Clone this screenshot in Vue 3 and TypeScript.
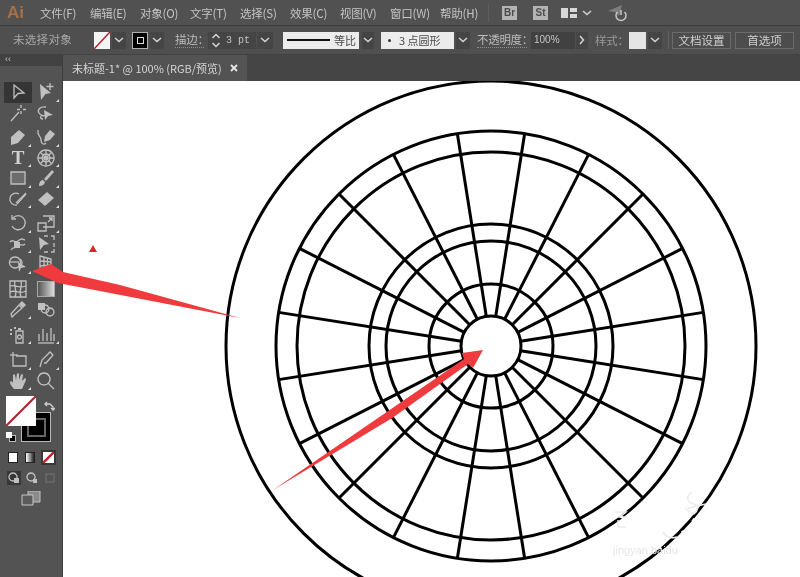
<script setup lang="ts">
interface Tool {
  name: string
  soft?: string[]
  fill?: string[]
  line?: string[]
  glyph?: string
  more?: boolean
  active?: boolean
  grad?: boolean
}

const menus = ['文件(F)', '编辑(E)', '对象(O)', '文字(T)', '选择(S)', '效果(C)', '视图(V)', '窗口(W)', '帮助(H)']

const groups: Tool[][] = [
  [
    { name: 'select', line: ['M6 3 L16 11 L10 11.5 L6 16Z'], active: true },
    { name: 'direct', fill: ['M4 2 L15 11 L9.5 12 L5 18Z'], line: ['M14 1v7M10.5 4.5h7'], more: true },
    { name: 'wand', line: ['M3 18 L11 9', 'M13 2v3M13 8v3M9 6.500h3M15 6.500h3'] },
    { name: 'lasso', line: ['M10 4 C4 3 1 7 3 10 C5 13 8 13 10 12', 'M5 13 C4 15 5 16 7 16'], fill: ['M8 7 L17 12 L12 13 L9 17Z'] },
  ],
  [
    { name: 'pen', fill: ['M3 18 L3 10 L11 3 L17 8 L10 16Z'], more: true },
    { name: 'curve', fill: ['M8 15 L9 9 L14 3 L19 7 L14 13Z'], line: ['M2 3 C1 10 5 8 5 13 C5 17 8 18 10 16'], more: true },
    { name: 'type', glyph: 'T', more: true },
    { name: 'polar', line: ['M10 2a8 8 0 1 0 .01 0Z', 'M10 6a4 4 0 1 0 .01 0Z', 'M10 2v16M2 10h16M4.500 4.500l11 11M15.500 4.500l-11 11'], more: true },
    { name: 'rect', soft: ['M3 4h14v12H3Z'], line: ['M3 4h14v12H3Z'], more: true },
    { name: 'brush', fill: ['M3 18 C3 14 5 12 7 12 L9 14 C8 17 6 18 3 18Z', 'M8 11 L16 2 L18 4 L10 13Z'], more: true },
    { name: 'shaper', line: ['M11 5 A6 6 0 1 0 9 16', 'M8 14 L18 4', 'M9 15 L18 5'], more: true },
    { name: 'eraser', fill: ['M2 11 L11 3 L18 9 L9 17Z'], more: true },
  ],
  [
    { name: 'rotate', line: ['M5 5 A7 7 0 1 1 4 13', 'M4 2v4h4'], more: true },
    { name: 'scale', line: ['M2 10h8v8H2Z', 'M7 3h11v11H7', 'M12 9l4-4M13 5h3v3'], more: true },
    { name: 'warp', line: ['M2 8c3-4 5 2 8-1s4-2 7-1', 'M3 16c2-4 5-1 7-4s4 1 7-2'], fill: ['M6 8h6v6H6Z'], more: true },
    { name: 'free', fill: ['M3 3 L13 10 L8 11 L4 16Z'], line: ['M8 2h4M15 2h3v4M18 9v4M18 15v3h-3M12 18H8'] },
    { name: 'shapebuilder', line: ['M7 3a5.500 5.500 0 1 0 .01 0Z', 'M12 5a4 4 0 0 1 0 7', 'M2 8h9'], fill: ['M10 8 L18 13 L13 14 L11 18Z'], more: true },
    { name: 'perspective', line: ['M4 2 L15 5 L15 14 L4 18Z', 'M4 7 L15 8M4 12 L15 11M8 3v14M11.500 4v12'] },
  ],
  [
    { name: 'mesh', line: ['M2 2h16v16H2Z', 'M2 7c5-2 7 3 16 0M2 13c5-3 9 3 16-1M7 2c-2 6 3 9 0 16M13 2c2 6-3 9 0 16'] },
    { name: 'gradient', grad: true },
    { name: 'dropper', line: ['M4 18 L3 15 L11 6 L14 9 L5 17Z'], fill: ['M11 5 L14 2 L18 6 L15 9Z'], more: true },
    { name: 'blend', fill: ['M2 4h7v7H2Z'], line: ['M9 6a4 4 0 1 0 .01 0Z', 'M14 9a4 4 0 1 0 .01 0Z'] },
  ],
  [
    { name: 'symbol', fill: ['M2 4h2v2H2ZM6 2h2v2H6ZM2 8h2v2H2Z', 'M10 3h3v2h-3Z'], line: ['M8 6h7v12H8Z', 'M11.500 10a2 2 0 1 0 .01 0Z'], more: true },
    { name: 'graph', line: ['M2 18h16', 'M3 16V9M7 16V4M11 16V8M15 16V3M18 16V9'], more: true },
  ],
  [
    { name: 'artboard', line: ['M5 2v14h13V6H8', 'M2 5h8'], more: true },
    { name: 'slice', line: ['M4 17 L6 10 L14 2 L17 5 L10 13 L8 13'], more: true },
    { name: 'hand', fill: ['M6 18 C4 16 2 13 2 11 C3 10 4 10 5 12 L5 4 C6 3 7 3 7 4 L8 9 L9 2.500 C10 2 11 2 11 3 L11 9 L13 3.500 C14 3 15 3 15 4 L14 10 L17 7 C18 7 18 8 18 9 L14 18Z'], more: true },
    { name: 'zoom', line: ['M8 2a6 6 0 1 0 .01 0Z', 'M12 12 L18 18'] },
  ],
]

// wheel drawing: every value read off the reference
const cx = 491
const cy = 346
const radii = [265, 215, 194, 122, 105, 62, 30]
const spokes = Array.from({ length: 20 }, (_, i) => {
  const a = ((9 + i * 18) * Math.PI) / 180
  return {
    x1: cx + 30 * Math.sin(a),
    y1: cy - 30 * Math.cos(a),
    x2: cx + 215 * Math.sin(a),
    y2: cy - 215 * Math.cos(a),
  }
})
</script>

<template>
  <div class="app">
    <header class="menubar">
      <span class="logo">Ai</span>
      <nav class="menus">
        <span v-for="m in menus" :key="m" class="menu">{{ m }}</span>
      </nav>
      <i class="vsep"></i>
      <span class="bridge">Br</span>
      <span class="bridge stock">St</span>
      <svg class="layout" width="16" height="12" viewBox="0 0 16 12">
        <path d="M0 1h7v10H0ZM9 1h7v4H9ZM9 7h7v4H9Z" />
      </svg>
      <svg class="chev layout-chev" width="10" height="8" viewBox="0 0 10 8"><path d="M1 2l4 3.500L9 2" /></svg>
      <svg class="sync" width="22" height="18" viewBox="0 0 22 18">
        <path class="sync-plane" d="M1 7 L15 1 L12 12 L8 8Z" />
        <path class="sync-power" d="M14 6v5M10.500 8a5 5 0 1 0 7 0" />
      </svg>
    </header>

    <section class="options">
      <div class="status">未选择对象</div>
      <div class="ml8 swatch-none"><svg width="16" height="17" viewBox="0 0 16 17"><path d="M0 17 L16 0" /></svg></div>
      <div class="drop ml2"><svg class="chev" width="10" height="8" viewBox="0 0 10 8"><path d="M1 2l4 3.500L9 2" /></svg></div>
      <div class="ml6 swatch-stroke"><i></i></div>
      <div class="drop ml2"><svg class="chev" width="10" height="8" viewBox="0 0 10 8"><path d="M1 2l4 3.500L9 2" /></svg></div>
      <span class="label dotted w29 ml11">描边：</span>
      <div class="stepper ml4">
        <svg class="chev" width="10" height="15" viewBox="0 0 10 15"><path d="M1.500 5L5 1.500 8.500 5M1.500 10L5 13.500 8.500 10" /></svg>
        <span>3 pt</span>
      </div>
      <div class="drop w16 ml1"><svg class="chev" width="10" height="8" viewBox="0 0 10 8"><path d="M1 2l4 3.500L9 2" /></svg></div>
      <div class="light w76 ml10"><i class="stroke-line"></i><span>等比</span></div>
      <div class="drop w12 ml3"><svg class="chev" width="10" height="8" viewBox="0 0 10 8"><path d="M1 2l4 3.500L9 2" /></svg></div>
      <div class="light w73 ml7"><i class="dot"></i><span>3 点圆形</span></div>
      <div class="drop ml2"><svg class="chev" width="10" height="8" viewBox="0 0 10 8"><path d="M1 2l4 3.500L9 2" /></svg></div>
      <span class="label dotted w50 ml7">不透明度：</span>
      <div class="field ml4">100%</div>
      <div class="drop w12 ml1"><svg class="chev" width="8" height="10" viewBox="0 0 8 10"><path d="M2 1l3.500 4L2 9" /></svg></div>
      <span class="label dim w29 ml7">样式：</span>
      <div class="style-swatch ml5"></div>
      <div class="drop ml2"><svg class="chev" width="10" height="8" viewBox="0 0 10 8"><path d="M1 2l4 3.500L9 2" /></svg></div>
      <i class="opt-sep"></i>
      <button class="btn ml3">文档设置</button>
      <button class="btn ml4">首选项</button>
    </section>

    <div class="body">
      <aside class="toolbar">
        <div class="collapse">‹‹</div>
        <div class="grip"></div>
        <div v-for="(group, g) in groups" :key="g" class="tools" :class="{ spaced: g >= 4 }">
          <div
            v-for="t in group"
            :key="t.name"
            class="tool"
            :class="{ active: t.active, more: t.more }"
          >
            <span v-if="t.glyph" class="glyph">{{ t.glyph }}</span>
            <i v-else-if="t.grad" class="grad-icon"></i>
            <svg v-else width="20" height="20" viewBox="0 0 20 20">
              <path v-for="d in t.soft" :key="d" class="icon-soft" :d="d" />
              <path v-for="d in t.fill" :key="d" class="icon-fill" :d="d" />
              <path v-for="d in t.line" :key="d" class="icon-line" :d="d" />
            </svg>
          </div>
        </div>

        <div class="colors">
          <div class="stroke-box"><i></i></div>
          <div class="fill-box"><svg width="30" height="30" viewBox="0 0 30 30"><path d="M0 30 L30 0" /></svg></div>
          <svg class="swap" width="12" height="12" viewBox="0 0 12 12"><path d="M2 4h5l3 3v3M4 2L2 4l2 2M8 8l2 2 2-2" /></svg>
          <div class="defaults"><i></i><b></b></div>
        </div>

        <div class="modes">
          <i class="mode-color"></i>
          <i class="mode-grad"></i>
          <span class="mode-none"><svg width="11" height="11" viewBox="0 0 11 11"><path d="M0 11 L11 0" /></svg></span>
        </div>

        <div class="draw">
          <span class="draw-on"><svg width="12" height="12" viewBox="0 0 12 12"><path d="M5 1a4 4 0 1 0 .01 0Z" class="icon-line" /><path d="M6 6h5v5H6Z" class="icon-fill" /></svg></span>
          <span><svg width="12" height="12" viewBox="0 0 12 12"><path d="M5 1a4 4 0 1 0 .01 0Z" class="icon-line" /><path d="M7 7h4v4H7Z" class="icon-fill" /></svg></span>
          <span class="draw-off"><svg width="12" height="12" viewBox="0 0 12 12"><path d="M2 2h8v8H2Z" /></svg></span>
        </div>

        <div class="screen">
          <svg width="20" height="15" viewBox="0 0 20 15"><path class="screen-back" d="M7 0h12v11H7Z" /><path class="screen-front" d="M1 4h11v10H1Z" /></svg>
        </div>
      </aside>

      <main class="doc">
        <div class="tabs">
          <div class="tab">
            <span>未标题-1* @ 100% (RGB/预览)</span>
            <svg width="8" height="8" viewBox="0 0 8 8"><path d="M1 1l6 6M7 1L1 7" /></svg>
          </div>
        </div>
        <div class="canvas">
          <svg class="wheel" viewBox="63 81 737 496" width="737" height="496">
            <g fill="none" stroke="#000" stroke-width="3">
              <circle v-for="r in radii" :key="r" :cx="cx" :cy="cy" :r="r" />
              <line v-for="(s, i) in spokes" :key="i" :x1="s.x1" :y1="s.y1" :x2="s.x2" :y2="s.y2" />
            </g>
            <!-- faint watermark sitting on the artwork -->
            <g fill="none" stroke="#fff" stroke-width="4">
              <path d="M693 522 L695 519M684 532 L682 533M661 547 L659 548M622 516 L621 518" />
            </g>
            <g fill="none" stroke="#ebebeb" stroke-width="1.500">
              <path d="M615 512h11l-6 5h7M618 520v7h8M692 492c-6 4-6 10 2 12 6 2 3 8 0 10 -5-2-8-4-8-6M688 508l18-4M663 532c3 5 8 7 14 5" />
            </g>
            <text x="613" y="554" class="mark-text">jingyan.baidu</text>
          </svg>
        </div>
      </main>
    </div>

    <svg class="marks" width="800" height="577" viewBox="0 0 800 577">
      <path class="arrow" d="M32 271 L51 264 L63 272 L120 285 L240 318 L58 283Z" />
      <path class="arrow" d="M483 350 L462 353 L464 359 L273 490 L393 417.500 L468 364 L473 368Z" />
      <path class="tri" d="M93 245 L97 252 L89 252Z" />
    </svg>
  </div>
</template>

<style scoped>
.app {
  position: relative;
  width: 800px;
  height: 577px;
  overflow: hidden;
  display: flex;
  flex-direction: column;
  background: #515151;
  color: #c4c4c4;
  font-family: "Noto Sans CJK SC", "Liberation Sans", sans-serif;
  font-size: 11.5px;
  filter: blur(0.4px);
}
i { display: block; }
svg { display: block; }
.chev { fill: none; stroke: #d4d4d4; stroke-width: 1.500; }

.menubar { height: 25px; flex: none; display: flex; align-items: center; background: #515151; border-bottom: 1px solid #3c3c3c; }
.logo { width: 28px; padding-left: 7px; box-sizing: border-box; font: bold 17px "Liberation Sans", sans-serif; color: #a5704a; }
.menus { display: flex; padding-left: 5px; width: 460px; box-sizing: border-box; }
.menu { width: 50px; flex: none; white-space: nowrap; letter-spacing: -0.2px; padding-left: 7px; box-sizing: border-box; }
.vsep { width: 1px; height: 18px; background: #5e5e5e; }
.bridge { width: 15px; height: 14px; margin-left: 13px; background: #b4b4b4; color: #4c4c4c; font: bold 10px/14px "Liberation Sans", sans-serif; text-align: center; }
.stock { margin-left: 16px; }
.layout { margin-left: 13px; fill: #d8d8d8; }
.layout-chev { margin-left: 5px; }
.sync { margin-left: 15px; }
.sync-plane { fill: #7d7d7d; }
.sync-power { fill: none; stroke: #c8c8c8; stroke-width: 1.500; }

.options { height: 29px; flex: none; display: flex; align-items: center; padding-left: 6px; background: #4f4f4f; border-bottom: 1px solid #424242; box-sizing: border-box; }
.status { width: 80px; height: 22px; padding-left: 7px; box-sizing: border-box; line-height: 21px; color: #a8a8a8; letter-spacing: 0.3px; }
.ml1 { margin-left: 1px; } .ml2 { margin-left: 2px; } .ml3 { margin-left: 3px; } .ml4 { margin-left: 4px; }
.ml5 { margin-left: 5px; } .ml6 { margin-left: 6px; } .ml7 { margin-left: 7px; } .ml8 { margin-left: 8px; }
.ml10 { margin-left: 10px; } .ml11 { margin-left: 11px; }
.swatch-none { width: 16px; height: 17px; background: #f4f4f4; }
.swatch-none path { stroke: #b01e2a; stroke-width: 1.500; }
.swatch-stroke { width: 16px; height: 17px; background: #000; border: 1px solid #b0b0b0; box-sizing: border-box; display: flex; align-items: center; justify-content: center; }
.swatch-stroke i { width: 7px; height: 7px; border: 1.500px solid #ddd; box-sizing: border-box; }
.drop { width: 14px; height: 17px; background: #454545; display: flex; align-items: center; justify-content: center; flex: none; }
.w12 { width: 12px; } .w16 { width: 16px; }
.label { white-space: nowrap; color: #bdbdbd; letter-spacing: -0.3px; flex: none; line-height: 15px; }
.dotted { border-bottom: 1px dotted #8c8c8c; }
.dim { color: #9a9a9a; }
.w29 { width: 29px; } .w50 { width: 50px; }
.stepper { width: 48px; height: 17px; background: #454545; display: flex; align-items: center; gap: 5px; padding-left: 3px; box-sizing: border-box; font: 10px "Liberation Mono", monospace; }
.light { height: 17px; background: #ececec; color: #4a4a4a; display: flex; align-items: center; flex: none; box-sizing: border-box; padding-left: 4px; white-space: nowrap; font-size: 11px; }
.w76 { width: 76px; } .w73 { width: 73px; }
.stroke-line { width: 43px; height: 2px; background: #111; margin-right: 4px; }
.dot { width: 3px; height: 3px; border-radius: 50%; background: #333; margin: 0 8px 0 3px; }
.field { width: 44px; height: 17px; background: #414141; font: 10px/15px "Liberation Sans", sans-serif; padding-left: 3px; box-sizing: border-box; }
.style-swatch { width: 17px; height: 17px; background: #e4e4e4; }
.opt-sep { width: 1px; height: 18px; background: #606060; margin-left: 6px; }
.btn { width: 59px; height: 17px; padding: 0; border: 1px solid #6a6a6a; background: #4d4d4d; color: #cfcfcf; font: 11.500px/15px "Noto Sans CJK SC", sans-serif; flex: none; }

.body { flex: 1; display: flex; min-height: 0; }
.toolbar { width: 63px; flex: none; box-sizing: border-box; background: #535353; border-right: 1px solid #3d3d3d; display: flex; flex-direction: column; }
.collapse { height: 11px; flex: none; background: #424242; font: 9px/9px "Liberation Sans", sans-serif; color: #c4c4c4; padding-left: 5px; box-sizing: border-box; }
.grip { height: 16px; flex: none; }
.tools { display: grid; grid-template-columns: 28px 28px; padding-left: 4px; margin-bottom: 4px; }
.spaced { margin-top: 1px; }
.tool { position: relative; height: 20.500px; display: flex; align-items: center; justify-content: center; }
.tool.active { background: #353535; }
.tool.more::after { content: ""; position: absolute; right: 1px; bottom: 1px; border-left: 3px solid transparent; border-bottom: 3px solid #ddd; }
.icon-soft { fill: #6c6c6c; }
.icon-fill { fill: #c0c0c0; }
.icon-line { fill: none; stroke: #c0c0c0; stroke-width: 1.300; }
.glyph { font: bold 19px/20px "Liberation Serif", serif; color: #d0d0d0; }
.grad-icon { width: 16px; height: 14px; border: 1px solid #aaa; background: linear-gradient(90deg, #555, #ddd); }

.colors { position: relative; height: 51px; margin-top: 1px; flex: none; }
.fill-box { position: absolute; left: 6px; top: 0; width: 30px; height: 30px; background: #fff; }
.fill-box path { stroke: #b01e2a; stroke-width: 2; }
.stroke-box { position: absolute; left: 21px; top: 16px; width: 30px; height: 30px; box-sizing: border-box; background: #000; border: 1px solid #bbb; display: flex; align-items: center; justify-content: center; }
.stroke-box i { width: 15px; height: 15px; border: 2px solid #666; }
.swap { position: absolute; left: 43px; top: 4px; fill: none; stroke: #cfcfcf; stroke-width: 1.300; }
.defaults { position: absolute; left: 6px; top: 36px; width: 10px; height: 10px; }
.defaults i { position: absolute; right: 0; bottom: 0; width: 7px; height: 7px; background: #000; border: 1px solid #bbb; box-sizing: border-box; }
.defaults b { position: absolute; left: 0; top: 0; width: 6px; height: 6px; background: #fff; }

.modes { display: flex; align-items: center; height: 15px; margin-top: 3px; padding-left: 8px; flex: none; }
.mode-color { width: 10px; height: 11px; background: #fff; border: 1px solid #222; box-sizing: border-box; }
.mode-grad { width: 10px; height: 11px; margin-left: 7px; border: 1px solid #222; box-sizing: border-box; background: linear-gradient(90deg, #fff, #222); }
.mode-none { margin-left: 6px; padding: 2px; background: #383838; }
.mode-none svg { background: #fff; }
.mode-none path { stroke: #c8202c; stroke-width: 2.500; }

.draw { display: flex; align-items: center; height: 15px; margin-top: 5px; padding-left: 7px; gap: 4px; flex: none; }
.draw span { padding: 1px 1px; }
.draw-on { background: #383838; }
.draw-off path { fill: none; stroke: #6b6b6b; stroke-width: 1.500; }
.screen { margin: 6px 0 0 21px; flex: none; }
.screen-back { fill: #8a8a8a; stroke: #c2c2c2; }
.screen-front { fill: #5b5b5b; stroke: #c8c8c8; }

.doc { flex: 1; min-width: 0; display: flex; flex-direction: column; }
.tabs { height: 26px; flex: none; background: #454545; }
.tab { width: 184px; height: 26px; box-sizing: border-box; padding: 0 9px; background: #535353; display: flex; align-items: center; justify-content: space-between; white-space: nowrap; color: #d4d4d4; font-size: 11px; }
.tab path { stroke: #e6e6e6; stroke-width: 1.800; }
.canvas { flex: 1; background: #fff; overflow: hidden; }
.mark-text { fill: #e6e6e6; font: 11px "Liberation Sans", sans-serif; }

.marks { position: absolute; left: 0; top: 0; pointer-events: none; }
.arrow { fill: #ef3b3d; }
.tri { fill: #d9272b; }
</style>
